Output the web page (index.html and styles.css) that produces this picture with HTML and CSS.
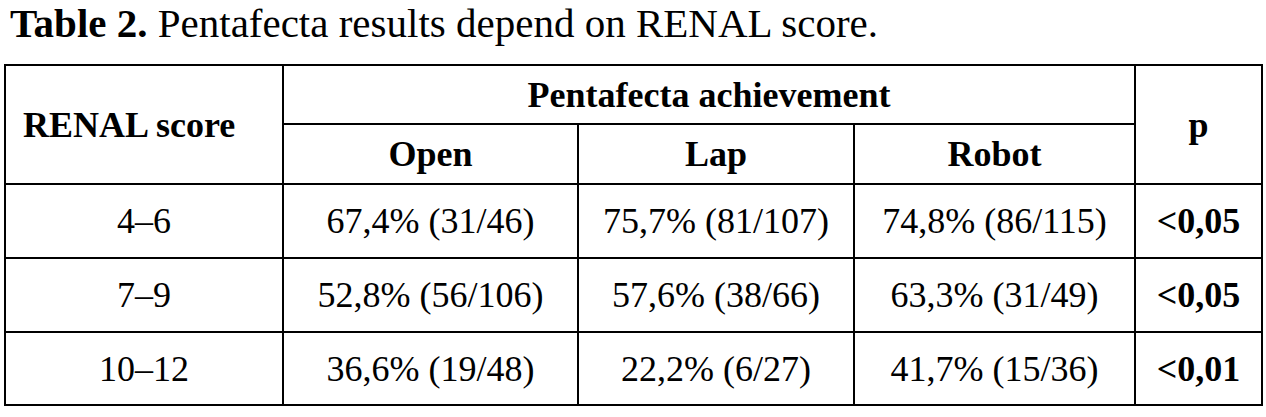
FILE: index.html
```html
<!DOCTYPE html>
<html>
<head>
<meta charset="utf-8">
<link rel="stylesheet" href="styles.css">
</head>
<body>
<p class="caption"><b>Table 2.</b> Pentafecta results depend on RENAL score.</p>
<table class="tbl">
  <colgroup>
    <col class="c1"><col class="c2"><col class="c3"><col class="c4"><col class="c5">
  </colgroup>
  <tr class="h1">
    <th rowspan="2" class="first">RENAL score</th>
    <th colspan="3">Pentafecta achievement</th>
    <th rowspan="2">p</th>
  </tr>
  <tr class="h2">
    <th>Open</th><th>Lap</th><th>Robot</th>
  </tr>
  <tr class="r">
    <td>4–6</td><td>67,4% (31/46)</td><td>75,7% (81/107)</td><td>74,8% (86/115)</td><td class="pv">&lt;0,05</td>
  </tr>
  <tr class="r">
    <td>7–9</td><td>52,8% (56/106)</td><td>57,6% (38/66)</td><td>63,3% (31/49)</td><td class="pv">&lt;0,05</td>
  </tr>
  <tr class="r last">
    <td>10–12</td><td>36,6% (19/48)</td><td>22,2% (6/27)</td><td>41,7% (15/36)</td><td class="pv">&lt;0,01</td>
  </tr>
</table>
</body>
</html>
```
FILE: styles.css
```css
html, body {
  margin: 0;
  padding: 0;
  background: #fff;
  color: #000;
  font-family: "Liberation Serif", "Times New Roman", serif;
}
.caption {
  margin: 0;
  padding: 0 0 0 10px;
  font-size: 41px;
  line-height: 46px;
  height: 64px;
  box-sizing: border-box;
}
.tbl {
  margin-left: 4px;
  border-collapse: collapse;
  table-layout: fixed;
  width: 1257px;
  font-size: 36px;
}
.c1 { width: 278px; }
.c2 { width: 295px; }
.c3 { width: 276px; }
.c4 { width: 281px; }
.c5 { width: 127px; }
.tbl th, .tbl td {
  border: 2px solid #000;
  text-align: center;
  vertical-align: middle;
  padding: 0;
}
.tbl th { font-weight: bold; }
.tbl th.first { text-align: left; padding-left: 17px; }
.h1 { height: 59px; }
.h2 { height: 60px; }
.r { height: 74px; }
.r.last { height: 73px; }
.pv { font-weight: bold; }
```
